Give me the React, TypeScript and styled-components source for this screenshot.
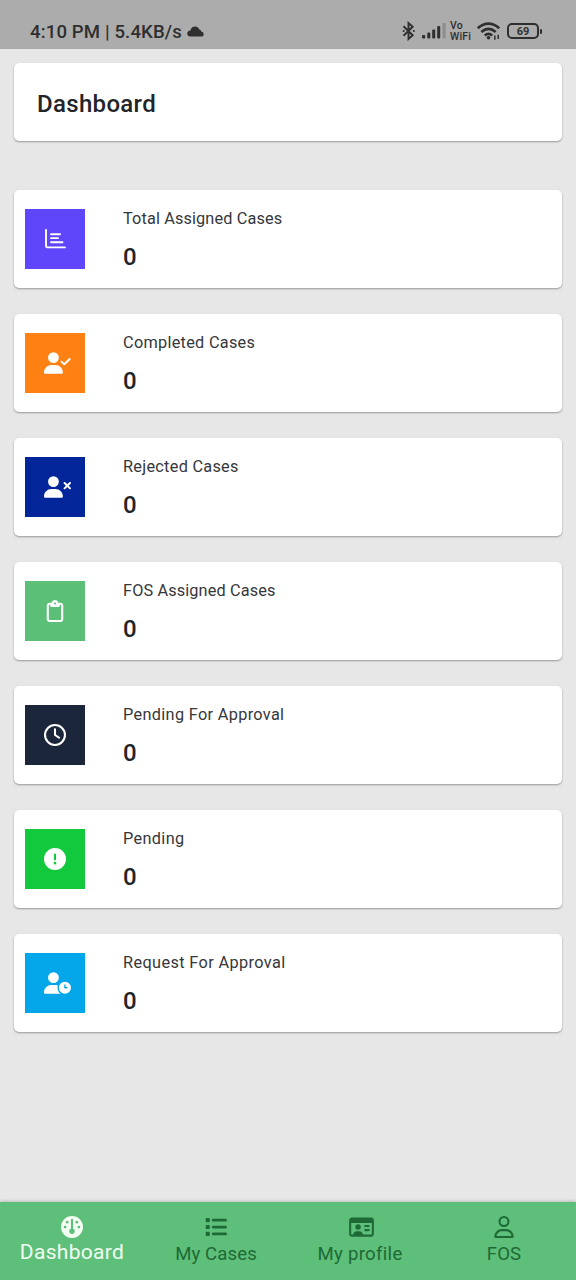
import React from 'react';
import styled, { createGlobalStyle } from 'styled-components';
import {
  FaUserCheck, FaUserXmark, FaRegClipboard, FaRegClock, FaCircleExclamation,
  FaUserClock, FaGauge, FaList, FaRegIdCard, FaRegUser,
} from 'react-icons/fa6';

const GlobalStyle = createGlobalStyle`
  * { box-sizing: border-box; }
  body { margin: 0; background: #e7e7e7; font-family: Roboto, sans-serif; }
`;

const Screen = styled.div`
  height: 1280px;
  width: 576px;
  display: flex;
  flex-direction: column;
  background: #e7e7e7;
  overflow: hidden;
`;

const StatusBar = styled.header`
  height: 49px;
  flex: none;
  background: #acacac;
  color: #2f2f2f;
  display: flex;
  justify-content: space-between;
  padding: 13px 33px 0 30px;
`;

const StatusText = styled.div`
  display: flex;
  align-items: center;
  height: 37px;
  gap: 5px;
  font-size: 18.6px;
  font-weight: 500;
  letter-spacing: 0.12px;
  white-space: nowrap;
`;

const StatusIcons = styled.div`
  display: flex;
  align-items: center;
  height: 36px;
`;

const VoWifi = styled.div`
  display: grid;
  width: 21px;
  margin: 0 6px 0 3px;
  font-size: 10.5px;
  line-height: 11px;
  font-weight: 500;
  letter-spacing: 0.2px;
`;

const Main = styled.main`
  flex: 1;
  padding: 14px 14px 0;
`;

const Card = styled.section`
  background: #fff;
  border-radius: 5px;
  box-shadow: 0 1px 2px rgba(0, 0, 0, 0.35);
`;

const TitleCard = styled(Card)`
  height: 78px;
  padding: 4px 23px 0;
  display: flex;
  align-items: center;
`;

const Title = styled.h1`
  margin: 0;
  font-size: 24px;
  font-weight: 500;
  letter-spacing: 0.32px;
  color: #222428;
`;

const CardList = styled.div`
  margin-top: 49px;
  display: flex;
  flex-direction: column;
  gap: 26px;
`;

const StatCard = styled(Card)`
  height: 98px;
  padding: 0 11px;
  display: flex;
  align-items: center;
`;

const IconTile = styled.div<{ $color: string; $wide?: boolean }>`
  width: 60px;
  height: 60px;
  flex: none;
  padding-left: ${(p) => (p.$wide ? '5px' : '0')};
  background: ${(p) => p.$color};
  color: #fff;
  display: flex;
  align-items: center;
  justify-content: center;

  svg {
    width: ${(p) => (p.$wide ? '27px' : '22px')};
    height: 22px;
  }
`;

const StatBody = styled.div`
  margin-left: 38px;
  align-self: flex-start;
`;

const StatLabel = styled.div<{ $spacing: number }>`
  padding-top: 18.5px;
  font-size: 16.3px;
  line-height: 20px;
  letter-spacing: ${(p) => p.$spacing}px;
  color: #35373b;
`;

const StatValue = styled.div`
  margin-top: 14px;
  font-size: 24px;
  line-height: 28px;
  font-weight: 500;
  color: #222428;
`;

const BottomNav = styled.nav`
  height: 78px;
  flex: none;
  display: grid;
  grid-template-columns: repeat(4, 1fr);
  background: #5dbf79;
  box-shadow: 0 -1px 3px rgba(0, 0, 0, 0.18);
`;

const NavItem = styled.a<{ $active?: boolean }>`
  display: flex;
  flex-direction: column;
  align-items: center;
  padding-top: 13px;
  color: ${(p) => (p.$active ? '#f2fff2' : '#1d6a36')};
`;

const NavIcon = styled.span`
  height: 23px;
  display: flex;
  align-items: center;
`;

const NavLabel = styled.span<{ $active?: boolean; $spacing: number }>`
  margin-top: ${(p) => (p.$active ? '2px' : '4px')};
  font-size: ${(p) => (p.$active ? '21px' : '18.6px')};
  line-height: 24px;
  letter-spacing: ${(p) => p.$spacing}px;
`;

const IdCardIcon = styled(FaRegIdCard)`
  width: 25px;
  height: 22px;
  margin-left: 2px;
`;

const ChartIcon = () => (
  <svg viewBox="0 0 22 22" fill="none" stroke="currentColor" strokeLinecap="round" strokeLinejoin="round">
    <path d="M2 2V17.4Q2 19.4 4 19.4H21" strokeWidth="1.9" />
    <path d="M7 6.2H16M7 10.1H14M7 14.2H18.5" strokeWidth="1.9" />
  </svg>
);

const CloudIcon = () => (
  <svg width="17" height="11" viewBox="0 0 17 11" fill="currentColor">
    <path d="M3.5 10.5C-.8 10.5-.8 5 3.4 4.6C4.2-.8 11-.8 12.3 3.6C13.3 3.7 14 4.4 14.2 5.5C17.6 6 17.4 10.5 14.2 10.5Z" />
  </svg>
);

const BluetoothIcon = () => (
  <svg width="20" height="20" viewBox="0 0 20 20" fill="none" stroke="currentColor" strokeWidth="1.9">
    <path d="M1.5 5.2L10.7 14.3L6.5 18V2L10.7 5.7L1.5 14.8" />
    <path d="M1.6 10h.1M11.8 10h.1" strokeWidth="2" strokeLinecap="round" />
  </svg>
);

const SignalIcon = () => (
  <svg width="25" height="16" viewBox="0 0 25 16" fill="currentColor">
    <rect x="0" y="12" width="3.2" height="3.5" rx="1" />
    <rect x="5.3" y="9.5" width="3" height="6" rx="1" />
    <rect x="10.2" y="6.5" width="3" height="9" rx="1" />
    <rect x="15.2" y="3" width="3" height="12.5" rx="1" />
    <rect x="20.6" y="0" width="3" height="15.5" rx="1" opacity="0.25" />
  </svg>
);

const WifiIcon = () => (
  <svg width="24" height="18" viewBox="0 0 24 18" fill="none" stroke="currentColor" strokeWidth="2.7">
    <path d="M.8 6.2Q11.5-2.8 22.2 6.2M4.3 10Q11.5 3.8 18.7 10M7.8 13.4Q11.5 10.2 15.2 13.4" />
    <circle cx="11.5" cy="15.8" r="1.8" fill="currentColor" stroke="none" />
    <path d="M17.8 13.5v4.2M21.2 12.8V17" strokeWidth="1.5" />
  </svg>
);

const Battery = styled.div`
  width: 32px;
  height: 16px;
  margin-left: 6px;
  border: 2px solid currentColor;
  border-radius: 5px;
  font-size: 11px;
  line-height: 13px;
  font-weight: 700;
  text-align: center;
`;

const BatteryTip = styled.div`
  width: 2px;
  height: 5px;
  margin: 0 1px;
  border-radius: 1px;
  background: currentColor;
`;

const stats = [
  { label: 'Total Assigned Cases', color: '#5f46fb', icon: <ChartIcon />, spacing: 0.13 },
  { label: 'Completed Cases', color: '#ff8114', icon: <FaUserCheck />, wide: true, spacing: 0.28 },
  { label: 'Rejected Cases', color: '#02259a', icon: <FaUserXmark />, wide: true, spacing: 0.28 },
  { label: 'FOS Assigned Cases', color: '#5bbf78', icon: <FaRegClipboard />, spacing: 0.13 },
  { label: 'Pending For Approval', color: '#1b263b', icon: <FaRegClock />, spacing: 0.33 },
  { label: 'Pending', color: '#12c93e', icon: <FaCircleExclamation />, spacing: 0.35 },
  { label: 'Request For Approval', color: '#02a6e9', icon: <FaUserClock />, wide: true, spacing: 0.38 },
];

const tabs = [
  { label: 'Dashboard', icon: <FaGauge size={22} />, active: true, spacing: 0.3 },
  { label: 'My Cases', icon: <FaList size={22} />, spacing: 0.1 },
  { label: 'My profile', icon: <IdCardIcon />, spacing: 0.3 },
  { label: 'FOS', icon: <FaRegUser size={22} />, spacing: 0.1 },
];

export default function App() {
  return (
    <Screen>
      <GlobalStyle />
      <StatusBar>
        <StatusText>
          <span>4:10 PM | 5.4KB/s</span>
          <CloudIcon />
        </StatusText>
        <StatusIcons>
          <BluetoothIcon />
          <SignalIcon />
          <VoWifi>
            <span>Vo</span>
            <span>WiFi</span>
          </VoWifi>
          <WifiIcon />
          <Battery>69</Battery>
          <BatteryTip />
        </StatusIcons>
      </StatusBar>
      <Main>
        <TitleCard><Title>Dashboard</Title></TitleCard>
        <CardList>
          {stats.map((s) => (
            <StatCard key={s.label}>
              <IconTile $color={s.color} $wide={s.wide}>{s.icon}</IconTile>
              <StatBody>
                <StatLabel $spacing={s.spacing}>{s.label}</StatLabel>
                <StatValue>0</StatValue>
              </StatBody>
            </StatCard>
          ))}
        </CardList>
      </Main>
      <BottomNav>
        {tabs.map((t) => (
          <NavItem key={t.label} $active={t.active}>
            <NavIcon>{t.icon}</NavIcon>
            <NavLabel $active={t.active} $spacing={t.spacing}>{t.label}</NavLabel>
          </NavItem>
        ))}
      </BottomNav>
    </Screen>
  );
}
